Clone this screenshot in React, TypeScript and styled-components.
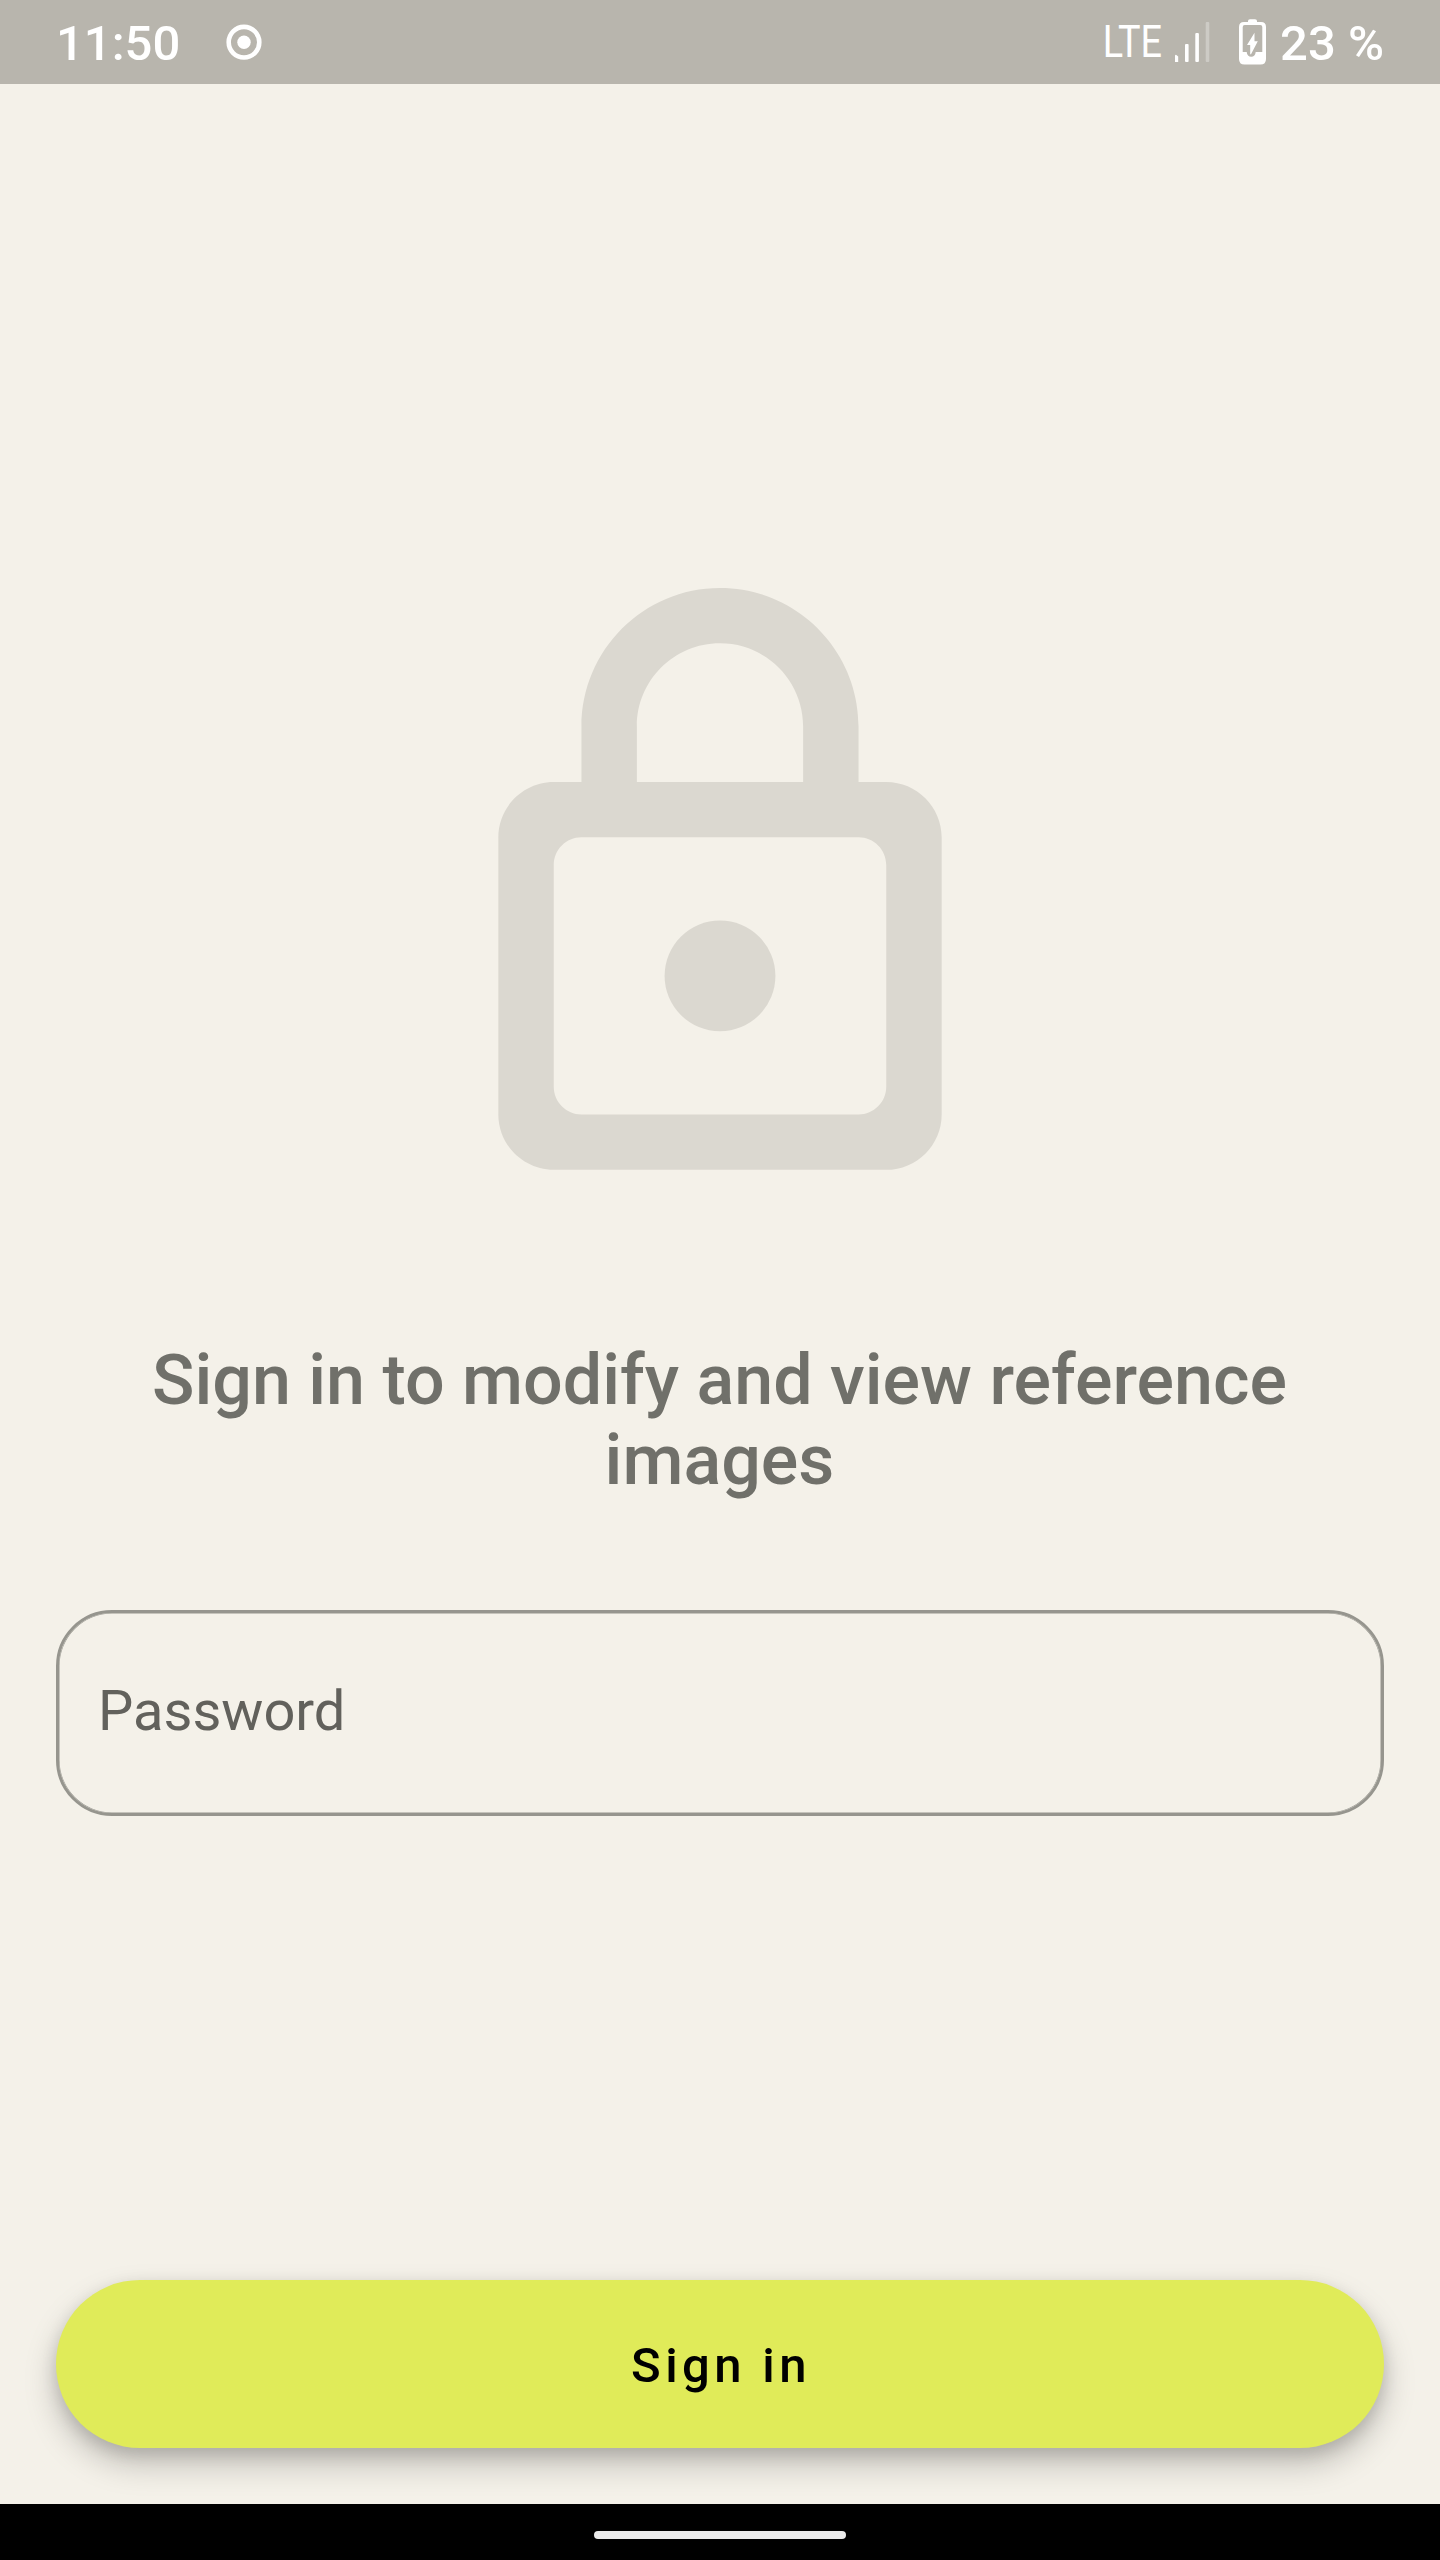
import React from "react";
import styled, { createGlobalStyle } from "styled-components";

const GlobalStyle = createGlobalStyle`
  *, *::before, *::after { box-sizing: border-box; }
  body { margin: 0; background: #f4f1e9; font-family: Roboto, sans-serif; }
`;

const Screen = styled.div`
  display: flex;
  flex-direction: column;
  width: 1440px;
  height: 2560px;
  background: #f4f1e9;
  overflow: hidden;
`;

const StatusBar = styled.header`
  display: flex;
  justify-content: space-between;
  height: 84px;
  padding: 0 56px;
  background: #b8b5ad;
  color: #fff;
`;

const StatusGroup = styled.div`
  display: flex;
  align-items: flex-start;
`;

const StatusText = styled.span`
  font-size: 49px;
  font-weight: 500;
  line-height: 57px;
  padding-top: 15px;
  white-space: pre;
`;

const NetworkText = styled.span`
  font-size: 44px;
  font-weight: 400;
  line-height: 52px;
  padding-top: 16px;
  transform: scaleX(0.86);
  transform-origin: right center;
`;

const RecordIcon = styled.svg`
  width: 36px;
  height: 36px;
  margin: 24px 0 0 46px;
`;

const SignalIcon = styled.svg`
  width: 35px;
  height: 41px;
  margin: 22px 0 0 13px;
`;

const BatteryIcon = styled.svg`
  width: 27px;
  height: 46px;
  margin: 19px 14px 0 29px;
`;

const Content = styled.main`
  display: flex;
  flex-direction: column;
  flex: 1;
  align-items: center;
  padding: 476px 56px 56px;
`;

const LockIcon = styled.svg`
  width: 666px;
  height: 665px;
  flex: none;
`;

const Heading = styled.h1`
  width: 1240px;
  margin: 115px 0 0;
  padding-right: 1px;
  color: #70706a;
  font-size: 70px;
  font-weight: 500;
  line-height: 80px;
  text-align: center;
`;

const PasswordField = styled.div`
  display: flex;
  align-items: center;
  width: 1328px;
  height: 206px;
  margin-top: 110px;
  padding: 0 39px 4px;
  border: 3px solid #96958e;
  border-radius: 56px;
  box-shadow: inset 0 0 0 0.5px #96958e;
  color: #62615c;
  font-size: 56px;
  line-height: 66px;
`;

const SignInButton = styled.button`
  width: 1328px;
  height: 168px;
  margin-top: auto;
  padding: 2px 0 0 2px;
  border: 0;
  border-radius: 84px;
  background: #e0eb59;
  color: #000;
  box-shadow: 0 16px 32px rgba(0, 0, 0, 0.22), 0 6px 16px rgba(0, 0, 0, 0.12);
  font-family: inherit;
  font-size: 49px;
  font-weight: 500;
  letter-spacing: 4.375px;
`;

const NavigationBar = styled.footer`
  display: flex;
  justify-content: center;
  align-items: center;
  height: 56px;
  padding-top: 6px;
  background: #000;
`;

const HomeHandle = styled.div`
  width: 252px;
  height: 8px;
  border-radius: 4px;
  background: #ebebeb;
`;

export default function App() {
  return (
    <Screen>
      <GlobalStyle />
      <StatusBar>
        <StatusGroup>
          <StatusText>11:50</StatusText>
          <RecordIcon viewBox="0 0 36 36">
            <circle cx="18" cy="18.2" r="15.3" fill="none" stroke="#fff" strokeWidth="4.6" />
            <circle cx="18" cy="18.2" r="6.7" fill="#fff" />
          </RecordIcon>
        </StatusGroup>
        <StatusGroup>
          <NetworkText>LTE</NetworkText>
          <SignalIcon viewBox="0 0 35 41" fill="#fff">
            <path d="M0 33.700q0-1 1-1l2.200 1.700V40H0z" />
            <rect x="10" y="22" width="3.6" height="18" rx="1" />
            <rect x="20.3" y="11" width="3.6" height="29" rx="1" />
            <rect x="30.7" y="0" width="3.6" height="40" rx="1" opacity="0.3" />
          </SignalIcon>
          <BatteryIcon viewBox="0 0 27 46">
            <path
              fill="#fff"
              fillRule="evenodd"
              d="M9 3V2Q9 0.300 11 0.300h5q2 0 2 1.700v1h4q5 0 5 5v32q0 5.500-5.500 5.500h-16Q0 45.500 0 40V8q0-5 5-5zM5.700 6Q3.700 6 3.700 8v25H7.700q.5 4.800 4.500 4.800t4.500-4.800h6.600V8q0-2-2-2z"
            />
            <path fill="#fff" d="M15.500 13.700v8.600h3.300L12 35.300h-.8v-9.200H8z" />
          </BatteryIcon>
          <StatusText>23 %</StatusText>
        </StatusGroup>
      </StatusBar>
      <Content>
        <LockIcon viewBox="0 -0.008 24 24" fill="#dbd8d0">
          <path
            fillRule="evenodd"
            d="M18 8h-1V6c0-2.760-2.240-5-5-5S7 3.240 7 6v2H6c-1.100 0-2 .9-2 2v10c0 1.100.9 2 2 2h12c1.100 0 2-.9 2-2V10c0-1.100-.9-2-2-2zM9 6c0-1.660 1.340-3 3-3s3 1.340 3 3v2H9zM7 10h10c.55 0 1 .45 1 1v8c0 .55-.45 1-1 1H7c-.55 0-1-.45-1-1v-8c0-.55.45-1 1-1z"
          />
          <circle cx="12" cy="15" r="2" />
        </LockIcon>
        <Heading>Sign in to modify and view reference images</Heading>
        <PasswordField>Password</PasswordField>
        <SignInButton>Sign in</SignInButton>
      </Content>
      <NavigationBar>
        <HomeHandle />
      </NavigationBar>
    </Screen>
  );
}
